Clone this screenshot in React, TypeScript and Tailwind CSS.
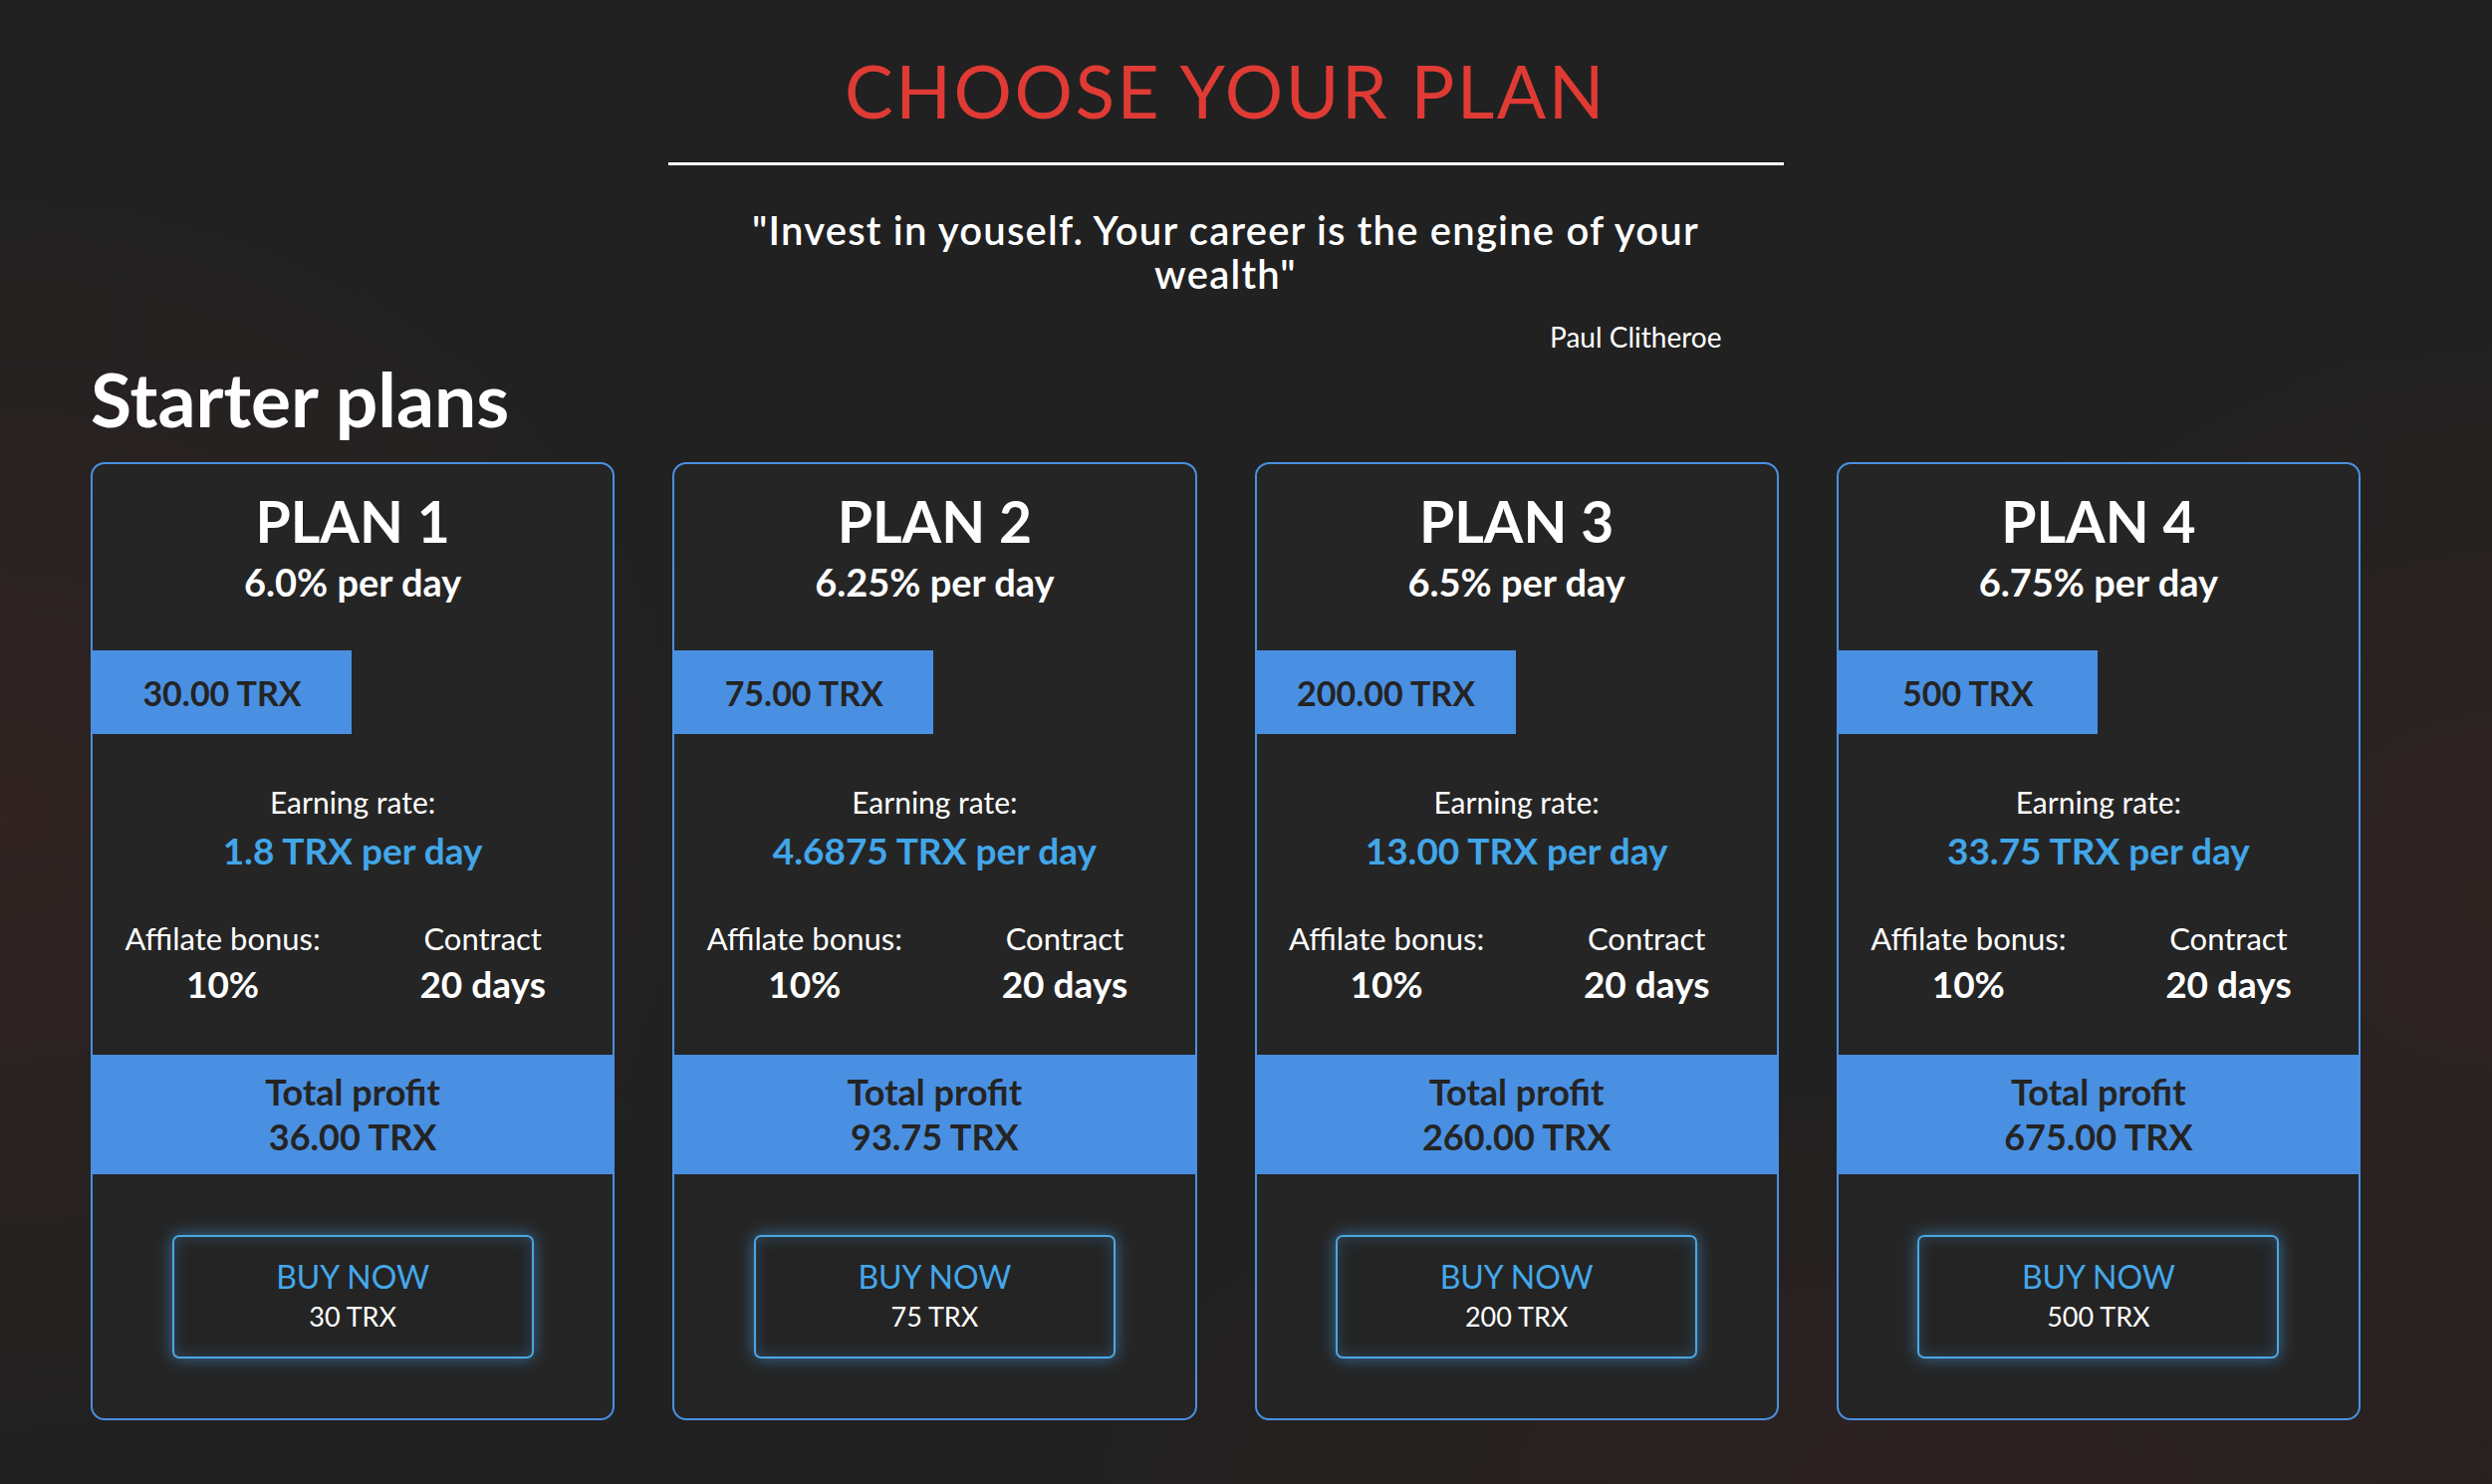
import React from "react";

type Plan = {
  name: string;
  rate: string;
  price: string;
  earning: string;
  profit: string;
  buy: string;
};

const plans: Plan[] = [
  { name: "PLAN 1", rate: "6.0% per day", price: "30.00 TRX", earning: "1.8 TRX per day", profit: "36.00 TRX", buy: "30 TRX" },
  { name: "PLAN 2", rate: "6.25% per day", price: "75.00 TRX", earning: "4.6875 TRX per day", profit: "93.75 TRX", buy: "75 TRX" },
  { name: "PLAN 3", rate: "6.5% per day", price: "200.00 TRX", earning: "13.00 TRX per day", profit: "260.00 TRX", buy: "200 TRX" },
  { name: "PLAN 4", rate: "6.75% per day", price: "500 TRX", earning: "33.75 TRX per day", profit: "675.00 TRX", buy: "500 TRX" },
];

function PlanCard({ plan }: { plan: Plan }) {
  return (
    <div className="flex flex-col rounded-[14px] border-2 border-[#4a90e2] bg-[#252525] pt-[24px] pb-[60px]">
      <div className="text-center text-[57px] leading-[66px] font-bold text-white">{plan.name}</div>
      <div className="mt-[6px] text-center text-[38px] leading-[44px] font-bold text-white">{plan.rate}</div>
      <div className="mt-[47px] flex h-[84px] w-[260px] items-center justify-center bg-[#4a90e2] text-[34px] font-bold text-[#242424]">
        {plan.price}
      </div>
      <div className="mt-[48px] text-center text-[30px] leading-[40px] text-white">Earning rate:</div>
      <div className="mt-[7px] text-center text-[37px] leading-[44px] font-bold text-[#42a6e8]">{plan.earning}</div>
      <div className="mt-[46px] grid grid-cols-2">
        <div className="flex flex-col items-center">
          <div className="text-[31px] leading-[40px] text-white">Affilate bonus:</div>
          <div className="mt-[4px] text-[37px] leading-[44px] font-bold text-white">10%</div>
        </div>
        <div className="flex flex-col items-center">
          <div className="text-[31px] leading-[40px] text-white">Contract</div>
          <div className="mt-[4px] text-[37px] leading-[44px] font-bold text-white">20 days</div>
        </div>
      </div>
      <div className="mt-[49px] flex h-[120px] flex-col items-center justify-center bg-[#4a90e2] text-[36px] leading-[45px] font-bold text-[#242424]">
        <div>Total profit</div>
        <div>{plan.profit}</div>
      </div>
      <div className="mt-[61px] flex justify-center">
        <button className="flex h-[124px] w-[363px] flex-col items-center justify-center rounded-[7px] border-2 border-[#4ba6e3] bg-[#242424] shadow-[0_0_16px_rgba(70,160,230,0.6),inset_0_0_16px_rgba(70,160,230,0.28)]">
          <span className="text-[32px] leading-[40px] text-[#45a8ea]">BUY NOW</span>
          <span className="text-[27px] leading-[40px] text-white">{plan.buy}</span>
        </button>
      </div>
    </div>
  );
}

export default function App() {
  return (
    <div className="min-h-[1490px] w-full bg-[#212121] bg-[radial-gradient(ellipse_30%_45%_at_0%_55%,rgba(90,40,35,0.28),transparent),radial-gradient(ellipse_25%_40%_at_100%_60%,rgba(90,40,35,0.25),transparent),radial-gradient(ellipse_40%_30%_at_80%_100%,rgba(80,35,30,0.25),transparent)] font-['Lato',sans-serif]">
      <div className="ml-[91px] w-[2279px] pt-[46px] pb-[64px]">
        <h1 className="text-center text-[73px] leading-[90px] font-normal tracking-[2.5px] text-[#df3b34]">CHOOSE YOUR PLAN</h1>
        <div className="mx-auto mt-[27px] h-[3px] w-[1120px] bg-white" />
        <div className="mx-auto mt-[43px] w-[1000px]">
          <p className="text-center text-[40px] leading-[44px] font-semibold tracking-[1.2px] text-white">
            "Invest in youself. Your career is the engine of your wealth"
          </p>
          <p className="mt-[23px] pr-[2px] text-right text-[28px] leading-[36px] text-white">Paul Clitheroe</p>
        </div>
        <h2 className="mt-[2px] text-[75px] leading-[84px] font-bold text-white">Starter plans</h2>
        <div className="mt-[22px] grid grid-cols-4 gap-[58px]">
          {plans.map((p) => (
            <PlanCard key={p.name} plan={p} />
          ))}
        </div>
      </div>
    </div>
  );
}
